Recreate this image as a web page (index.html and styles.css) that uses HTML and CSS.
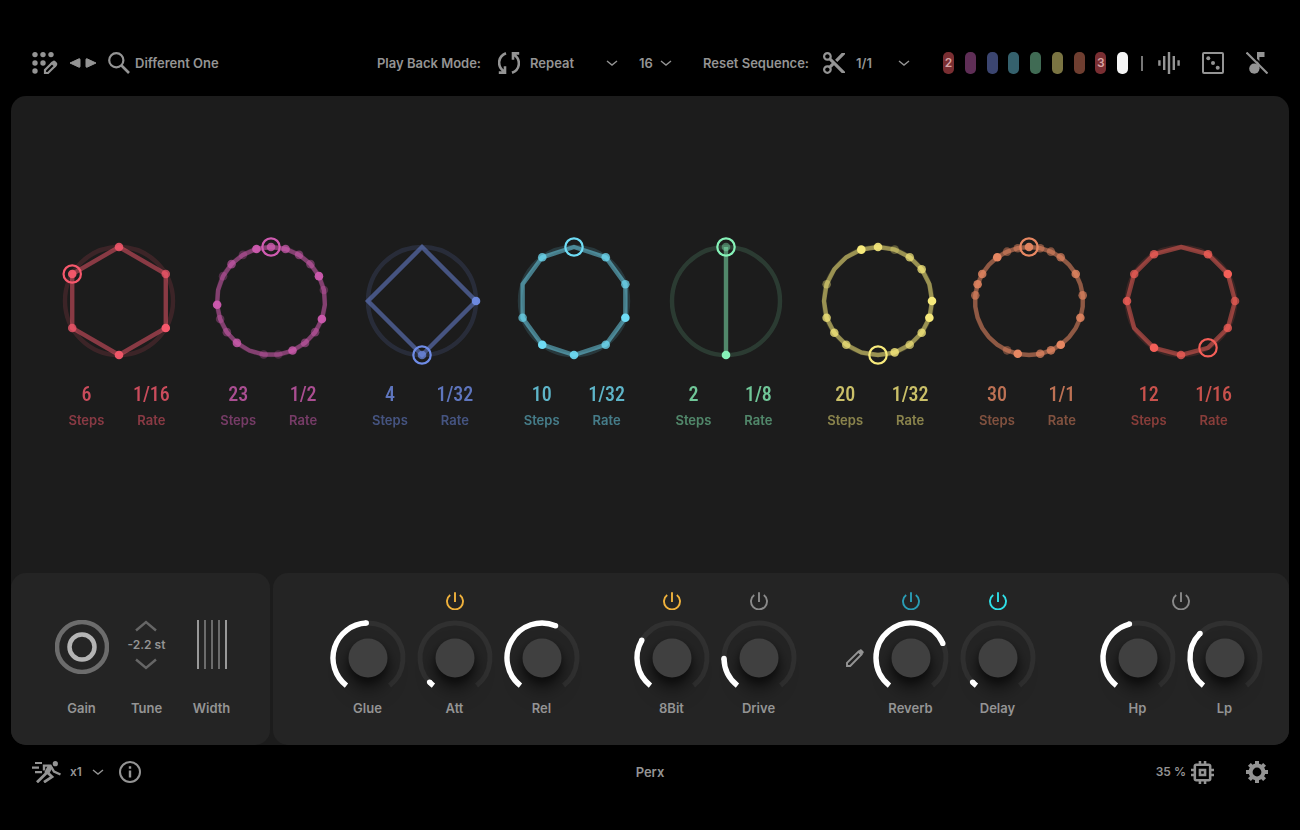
FILE: index.html
```html
<!DOCTYPE html>
<html lang="en">
<head>
  <meta charset="UTF-8">
  <meta name="viewport" content="width=device-width, initial-scale=1.0">
  <title>Perx</title>
  <link rel="stylesheet" href="styles.css">
</head>
<body>
  <header class="topbar">
    <div class="preset">
      <button class="icon-btn" aria-label="Edit preset">
        <svg width="26" height="24" viewBox="0 0 26 24">
          <g fill="currentColor">
            <circle cx="3" cy="3.6" r="2.7"/><circle cx="11" cy="3.6" r="2.7"/><circle cx="19" cy="3.6" r="2.7"/>
            <circle cx="3" cy="12" r="2.7"/><circle cx="11" cy="12" r="2.7"/><circle cx="3" cy="20" r="2.7"/>
            <path d="M18 12.500 L20.800 10 Q22 9 23.200 10 L24.900 11.800 Q25.800 13 24.900 14.200 L22.500 17 Z"/>
          </g>
          <path d="M13 22 V19 L20 12 L23 15 L16 22 Z" fill="#000" stroke="currentColor" stroke-width="2.200"/>
        </svg>
      </button>
      <div class="steppers">
        <button class="icon-btn" aria-label="Previous preset">
          <svg width="12" height="12" viewBox="0 0 12 12"><path d="M1 6 L10 1.800 Q11 1.500 11 2.500 V9.500 Q11 10.500 10 10.200 Z" fill="currentColor" stroke="currentColor" stroke-linejoin="round"/></svg>
        </button>
        <button class="icon-btn" aria-label="Next preset">
          <svg width="12" height="12" viewBox="0 0 12 12"><path d="M11 6 L2 1.800 Q1 1.500 1 2.500 V9.500 Q1 10.500 2 10.200 Z" fill="currentColor" stroke="currentColor" stroke-linejoin="round"/></svg>
        </button>
      </div>
      <button class="preset-name">
        <svg width="22" height="22" viewBox="0 0 22 22" fill="none" stroke="currentColor" stroke-width="2.200"><circle cx="8.300" cy="8.300" r="7.100"/><path d="M13.500 13.500 L21 21" stroke-width="2.700"/></svg>
        Different One
      </button>
    </div>

    <div class="playback">
      <label for="mode">Play Back Mode:</label>
      <svg class="mode-icon" width="22" height="22" viewBox="0 0 22 22" fill="none" stroke="currentColor" stroke-width="2.600">
        <path d="M8 1.200 C-0.500 4.500 -1 14.500 6 19.500 M0.800 20.600 H7 V14.200"/>
        <path d="M8 1.200 C-0.500 4.500 -1 14.500 6 19.500 M0.800 20.600 H7 V14.200" transform="rotate(180 11 11)"/>
      </svg>
      <div class="select mode">
        <select id="mode"><option>Repeat</option><option>Once</option></select>
        <svg class="chevron" width="12" height="8" viewBox="0 0 12 8"><path d="M1 2 L6 6 L11 2"/></svg>
      </div>
      <div class="select length">
        <select id="length" aria-label="Length"><option>16</option><option>32</option></select>
        <svg class="chevron" width="12" height="8" viewBox="0 0 12 8"><path d="M1 2 L6 6 L11 2"/></svg>
      </div>
      <label for="reset">Reset Sequence:</label>
      <svg class="reset-icon" width="22" height="22" viewBox="2 2 20 20" fill="currentColor"><path d="M9.640 7.640c.23-.5.36-1.050.36-1.640 0-2.210-1.790-4-4-4S2 3.790 2 6s1.790 4 4 4c.59 0 1.140-.13 1.640-.36L10 12l-2.360 2.360C7.140 14.130 6.590 14 6 14c-2.210 0-4 1.790-4 4s1.790 4 4 4 4-1.790 4-4c0-.59-.13-1.140-.36-1.640L12 14l7 7h3v-1L9.640 7.640zM6 8c-1.100 0-2-.89-2-2s.9-2 2-2 2 .89 2 2-.9 2-2 2zm0 12c-1.100 0-2-.89-2-2s.9-2 2-2 2 .89 2 2-.9 2-2 2zM19 3l-6 6 2 2 7-7V3z"/></svg>
      <div class="select reset">
        <select id="reset"><option>1/1</option><option>1/2</option></select>
        <svg class="chevron" width="12" height="8" viewBox="0 0 12 8"><path d="M1 2 L6 6 L11 2"/></svg>
      </div>
    </div>

    <div class="tools">
      <div class="chips">
        <button class="chip red" aria-label="Track 1">2</button>
        <button class="chip purple" aria-label="Track 2"></button>
        <button class="chip blue" aria-label="Track 3"></button>
        <button class="chip cyan" aria-label="Track 4"></button>
        <button class="chip green" aria-label="Track 5"></button>
        <button class="chip yellow" aria-label="Track 6"></button>
        <button class="chip orange" aria-label="Track 7"></button>
        <button class="chip red" aria-label="Track 8">3</button>
        <button class="chip white" aria-label="All tracks"></button>
      </div>
      <span class="divider"></span>
      <div class="tool-icons">
        <button class="icon-btn" aria-label="Waveform">
          <svg width="22" height="22" viewBox="0 0 22 22" stroke="currentColor" stroke-width="2.400"><path d="M1.400 8.200 V13.800 M6.200 4 V18 M11 0 V22 M15.800 4 V18 M20.600 8.200 V13.800"/></svg>
        </button>
        <button class="icon-btn" aria-label="Randomize">
          <svg width="22" height="22" viewBox="0 0 22 22" fill="currentColor"><rect x="1" y="1" width="20" height="20" rx="1" fill="none" stroke="currentColor" stroke-width="2"/><circle cx="6.300" cy="6.300" r="2"/><circle cx="11" cy="11" r="2"/><circle cx="15.700" cy="15.700" r="2"/></svg>
        </button>
        <button class="icon-btn" aria-label="Mute">
          <svg width="22" height="22" viewBox="0 0 22 22"><circle cx="8.300" cy="16.700" r="5.100" fill="currentColor"/><path d="M11 0 H18.500 V5 H13.400 V17 H11 Z" fill="currentColor"/><path d="M2 -1 L23.500 20.500" stroke="#000" stroke-width="1.600"/><path d="M0.500 0.500 L21.500 21.500" stroke="currentColor" stroke-width="2.100"/></svg>
        </button>
      </div>
    </div>
  </header>

  <main class="panel">
    <section class="tracks" id="tracks"></section>

    <section class="controls">
      <div class="output">
        <div class="param">
          <div class="dial">
            <svg width="54" height="54" viewBox="0 0 54 54" fill="none"><circle cx="27" cy="27" r="25" stroke="#6c6c6c" stroke-width="4.500"/><circle cx="27" cy="27" r="12.500" stroke="#b4b4b4" stroke-width="4.500"/></svg>
            <input type="range" id="gain" value="50">
          </div>
          <label for="gain">Gain</label>
        </div>
        <div class="param">
          <div class="tune">
            <button class="icon-btn" aria-label="Tune up"><svg width="22" height="12" viewBox="0 0 22 12"><path d="M1 10.500 L11 2 L21 10.500"/></svg></button>
            <output id="tune">-2.2 st</output>
            <button class="icon-btn" aria-label="Tune down"><svg width="22" height="12" viewBox="0 0 22 12"><path d="M1 1.500 L11 10 L21 1.500"/></svg></button>
          </div>
          <label for="tune">Tune</label>
        </div>
        <div class="param">
          <div class="dial">
            <svg width="32" height="50" viewBox="0 0 32 50" stroke-width="2"><path d="M2 0 V49 M30 0 V49" stroke="#999"/><path d="M9 0 V49 M16 0 V49 M23 0 V49" stroke="#6c6c6c"/></svg>
            <input type="range" id="width" value="50">
          </div>
          <label for="width">Width</label>
        </div>
      </div>

      <div class="effects">
        <div class="group">
          <button class="power amber" aria-label="Compressor on"></button>
          <div class="knobs">
            <div class="knob"><div class="dial"><input type="range" id="glue" value="49"></div><label for="glue">Glue</label></div>
            <div class="knob"><div class="dial"><input type="range" id="att" value="3"></div><label for="att">Att</label></div>
            <div class="knob"><div class="dial"><input type="range" id="rel" value="58"></div><label for="rel">Rel</label></div>
          </div>
        </div>
        <div class="group pair">
          <div class="knob"><button class="power amber" aria-label="8Bit on"></button><div class="dial"><input type="range" id="bit" value="29"></div><label for="bit">8Bit</label></div>
          <div class="knob"><button class="power" aria-label="Drive on"></button><div class="dial"><input type="range" id="drive" value="18"></div><label for="drive">Drive</label></div>
        </div>
        <div class="group pair space">
          <button class="icon-btn edit" aria-label="Edit reverb">
            <svg width="20" height="20" viewBox="0 0 20 20"><path d="M2 18 V14.800 L13.500 3.500 L16.500 6.500 L5.200 18 Z" fill="none" stroke="currentColor" stroke-width="1.900"/><path d="M12.500 4 L15 1.500 Q15.800 1 16.500 1.600 L18.500 3.500 Q19 4.300 18.500 5 L16 7.500 Z" fill="currentColor"/></svg>
          </button>
          <div class="knob"><button class="power teal" aria-label="Reverb on"></button><div class="dial"><input type="range" id="reverb" value="73"></div><label for="reverb">Reverb</label></div>
          <div class="knob"><button class="power aqua" aria-label="Delay on"></button><div class="dial"><input type="range" id="delay" value="3"></div><label for="delay">Delay</label></div>
        </div>
        <div class="group">
          <button class="power" aria-label="Filter on"></button>
          <div class="knobs">
            <div class="knob"><div class="dial"><input type="range" id="hp" value="45"></div><label for="hp">Hp</label></div>
            <div class="knob"><div class="dial"><input type="range" id="lp" value="34"></div><label for="lp">Lp</label></div>
          </div>
        </div>
      </div>
    </section>
  </main>

  <footer class="bottombar">
    <div class="speed">
      <svg width="29" height="22" viewBox="0 0 29 22" fill="none" stroke="currentColor" stroke-width="2.200">
        <circle cx="23.300" cy="2.700" r="2.600" fill="currentColor" stroke="none"/>
        <path d="M3 2 H10 M0 6.600 H7 M3 11.200 H10"/>
        <path d="M12 9.500 V4.600 H18.500 L22 10.500 L28.500 13.500" stroke-width="2.400"/>
        <path d="M18.500 5 L14.500 12.500" stroke-width="5"/>
        <path d="M15 11.500 L5 21.300 M16 12 L20 15.800 L12 21.200" stroke-width="2.800"/>
      </svg>
      <div class="select rate">
        <select id="speed" aria-label="Speed"><option>x1</option><option>x2</option></select>
        <svg class="chevron" width="12" height="8" viewBox="0 0 12 8"><path d="M1 2 L6 6 L11 2"/></svg>
      </div>
      <button class="icon-btn" aria-label="Info">
        <svg width="22" height="22" viewBox="0 0 22 22"><circle cx="11" cy="11" r="10" fill="none" stroke="currentColor" stroke-width="2"/><path d="M11 9.500 V16.500 M11 5.300 V7.700" stroke="currentColor" stroke-width="2.400"/></svg>
      </button>
    </div>
    <span class="title">Perx</span>
    <div class="system">
      <span class="cpu">35 %
        <svg width="23" height="23" viewBox="3 3 18 18" fill="currentColor"><path d="M15 9H9v6h6V9zm-2 4h-2v-2h2v2zm8-2V9h-2V7c0-1.100-.9-2-2-2h-2V3h-2v2h-2V3H9v2H7c-1.100 0-2 .9-2 2v2H3v2h2v2H3v2h2v2c0 1.100.9 2 2 2h2v2h2v-2h2v2h2v-2h2c1.100 0 2-.9 2-2v-2h2v-2h-2v-2h2zm-4 6H7V7h10v10z"/></svg>
      </span>
      <button class="icon-btn" aria-label="Settings">
        <svg width="22" height="22" viewBox="-11 -11 22 22" stroke="currentColor">
          <circle r="6.400" fill="none" stroke-width="4"/>
          <path d="M0 -11 V-7 M0 11 V7 M-11 0 H-7 M11 0 H7 M-7.600 -7.600 L-5 -5 M7.600 7.600 L5 5 M-7.600 7.600 L-5 5 M7.600 -7.600 L5 -5" stroke-width="4"/>
        </svg>
      </button>
    </div>
  </footer>

  <script src="script.js"></script>
</body>
</html>
```
FILE: styles.css
```css
* {
  margin: 0;
  padding: 0;
  box-sizing: border-box;
}

body {
  display: flex;
  flex-direction: column;
  min-height: 100vh;
  background-color: #000;
  color: #949494;
  font-family: Inter, Roboto, sans-serif;
  font-size: 13px;
  font-weight: 600;
  line-height: 20px;
}

svg {
  display: block;
  flex: none;
}

button,
select,
input {
  background: none;
  border: none;
  color: inherit;
  font: inherit;
}

button,
select {
  cursor: pointer;
}

.icon-btn {
  display: flex;
}

.select {
  display: grid;
  align-items: center;
}

.select > * {
  grid-area: 1 / 1;
}

.select select {
  width: 100%;
  appearance: none;
}

.select option {
  background-color: #242424;
}

.chevron {
  justify-self: end;
  fill: none;
  stroke: currentColor;
  stroke-width: 1.4;
  pointer-events: none;
}

/* top bar */
.topbar {
  display: flex;
  align-items: center;
  gap: 33px;
  height: 96px;
  padding: 30px 32px 0;
}

.preset,
.steppers,
.preset-name,
.playback,
.tools,
.chips,
.tool-icons {
  display: flex;
  align-items: center;
}

.preset {
  gap: 11px;
}

.steppers {
  gap: 4px;
}

.preset-name {
  gap: 5px;
}

.playback {
  margin-left: auto;
}

.mode-icon {
  margin: 0 10px 0 17px;
}

.select.mode {
  width: 88px;
  margin-right: 21px;
}

.select.length {
  width: 33px;
  margin-right: 31px;
}

.reset-icon {
  margin: 0 11px 0 14px;
}

.select.reset {
  width: 54px;
}

.chips {
  justify-content: space-between;
  width: 185px;
}

.chip {
  width: 11px;
  height: 22px;
  border-radius: 5px;
  font-size: 12px;
  text-align: center;
  color: #d8a5a5;
}

.chip.red { background-color: #7a2e32; }
.chip.purple { background-color: #5f2e56; }
.chip.blue { background-color: #3b4570; }
.chip.cyan { background-color: #35616d; }
.chip.green { background-color: #406b54; }
.chip.yellow { background-color: #7a7442; }
.chip.orange { background-color: #6f3e30; }
.chip.white { background-color: #f5f5f5; }

.divider {
  width: 2px;
  height: 15px;
  margin: 0 15px 0 13px;
  background-color: #777;
}

.tool-icons {
  gap: 22px;
}

/* main panel */
.panel {
  flex: 1;
  display: flex;
  flex-direction: column;
  margin: 0 11px;
  border-radius: 15px;
  background-color: #1c1c1c;
}

.tracks {
  flex: 1;
  display: grid;
  grid-template-columns: repeat(8, 1fr);
  align-items: center;
  padding: 0 32px 2px;
}

.track {
  display: flex;
  flex-direction: column;
  align-items: center;
  gap: 14px;
}

.track-values {
  display: grid;
  grid-template-columns: 65px 65px;
  color: var(--color);
}

.track-values div {
  display: flex;
  flex-direction: column;
  text-align: center;
}

.track-values input,
.track-values select {
  width: 100%;
  height: 28px;
  appearance: none;
  font-family: "Roboto Condensed", "Liberation Sans Narrow", Roboto, sans-serif;
  font-size: 20px;
  font-weight: 500;
  text-align: center;
  text-align-last: center;
  opacity: 0.8;
}

.track-values label {
  order: 1;
  line-height: 24px;
  opacity: 0.5;
}

/* bottom controls */
.controls {
  display: flex;
  gap: 3px;
}

.output,
.effects {
  display: flex;
  align-items: flex-end;
  border-radius: 15px;
  background-color: #242424;
  padding-bottom: 27px;
}

.output {
  padding-left: 38px;
  padding-right: 26px;
}

.param {
  display: flex;
  flex-direction: column;
  align-items: center;
  gap: 24px;
  width: 65px;
}

.dial {
  display: grid;
  justify-items: center;
}

.dial > * {
  grid-area: 1 / 1;
}

.dial input {
  width: 100%;
  height: 100%;
  opacity: 0;
  cursor: pointer;
}

.param .dial {
  height: 54px;
}

.tune {
  display: flex;
  flex-direction: column;
  align-items: center;
  height: 54px;
  gap: 3px;
  font-size: 12px;
  white-space: nowrap;
}

.tune svg {
  fill: none;
  stroke: #666;
  stroke-width: 2.4;
}

.effects {
  flex: 1;
  justify-content: space-between;
  padding: 19px 21px 27px 51px;
}

.group,
.knob {
  display: flex;
  flex-direction: column;
  align-items: center;
}

.group.pair {
  flex-direction: row;
}

.group.space {
  margin-right: 10px;
}

.knobs {
  display: flex;
}

.knob {
  width: 87px;
}

.knob label {
  margin-top: 2px;
}

.power {
  display: flex;
  margin-bottom: 10px;
  color: #8a8a8a;
}

.power.amber { color: #f0b23c; }
.power.teal { color: #2a9db5; }
.power.aqua { color: #2fe0e8; }

.edit {
  width: 22px;
  margin-top: 5px;
}

.cap {
  fill: #404040;
  filter: drop-shadow(0 5px 4px rgba(0, 0, 0, 0.4)) drop-shadow(0 10px 8px rgba(0, 0, 0, 0.5));
}

/* footer */
.bottombar {
  display: grid;
  grid-template-columns: 1fr auto 1fr;
  align-items: center;
  height: 85px;
  padding: 0 32px 31px;
}

.speed,
.system,
.cpu {
  display: flex;
  align-items: center;
}

.select.rate {
  width: 34px;
  margin: 0 15px 0 9px;
}

.select.rate,
.cpu {
  font-size: 12px;
}

.system {
  justify-content: flex-end;
  gap: 32px;
}

.cpu {
  gap: 5px;
}
```
FILE: script.js
```js
// dots: step index -> velocity (0 to 1), steps left out are silent
const tracks = [
  { steps: 6, rate: "1/16", color: "#f6586c", head: 5, dots: { 0: 0.85, 1: 0.7, 2: 1, 3: 0.95, 4: 0.75, 5: 0.95 } },
  { steps: 23, rate: "1/2", color: "#cf5bb0", head: 0, dots: { 0: 0.8, 1: 0.7, 2: 0.5, 3: 0.45, 4: 0.95, 5: 0.3, 7: 0.95, 8: 0.45, 9: 0.5, 10: 0.8, 11: 0.25, 12: 0.3, 14: 0.8, 15: 0.4, 16: 0.35, 17: 0.95, 19: 0.3, 20: 0.6, 21: 0.3, 22: 0.95 } },
  { steps: 4, rate: "1/32", color: "#6f8ce6", head: 2, dots: { 1: 0.95, 2: 0.7 } },
  { steps: 10, rate: "1/32", color: "#6fdcf5", head: 0, dots: { 1: 0.75, 2: 0.7, 3: 1, 4: 0.75, 5: 0.9, 6: 1, 7: 0.65, 9: 0.75 } },
  { steps: 2, rate: "1/8", color: "#86f2b8", head: 0, dots: { 0: 0.4, 1: 1 } },
  { steps: 20, rate: "1/32", color: "#f7ea7c", head: 10, dots: { 0: 0.9, 1: 0.3, 2: 0.7, 3: 0.75, 5: 1, 6: 1, 7: 0.75, 8: 0.65, 9: 0.8, 12: 0.7, 13: 0.75, 14: 0.75, 16: 0.4, 19: 1 } },
  { steps: 30, rate: "1/1", color: "#e68762", head: 0, dots: { 0: 0.95, 1: 0.5, 2: 0.5, 3: 0.65, 5: 0.8, 7: 0.65, 9: 0.85, 12: 1, 13: 0.75, 14: 0.7, 16: 1, 17: 0.4, 23: 0.6, 24: 0.85, 25: 0.8, 27: 1, 28: 0.45, 29: 0.5 } },
  { steps: 12, rate: "1/16", color: "#f45f58", head: 5, dots: { 1: 0.8, 2: 1, 3: 0.65, 4: 0.75, 6: 0.75, 7: 1, 9: 0.8, 10: 0.7, 11: 0.75 } }
];

function point(cx, cy, r, degrees) {
  const a = (degrees * Math.PI) / 180;
  return [cx + r * Math.sin(a), cy - r * Math.cos(a)].map((n) => n.toFixed(2));
}

function ring(track) {
  const at = (i) => point(65, 65, 54, (i * 360) / track.steps);
  const corners = Array.from({ length: track.steps }, (_, i) => at(i).join());
  const dots = Object.entries(track.dots).map(([i, velocity]) => {
    const [x, y] = at(i);
    return `<circle cx="${x}" cy="${y}" r="4.3" fill="${track.color}" opacity="${velocity}"/>`;
  });
  const [hx, hy] = at(track.head);
  return `<svg width="130" height="130" viewBox="0 0 130 130" fill="none" stroke-width="4.4">
    <circle cx="65" cy="65" r="54" stroke="${track.color}" opacity="0.15"/>
    <polygon points="${corners.join(" ")}" stroke="${track.color}" opacity="0.5"/>
    ${dots.join("")}
    <circle cx="${hx}" cy="${hy}" r="8.7" stroke="${track.color}" stroke-width="2.2"/>
  </svg>`;
}

document.getElementById("tracks").innerHTML = tracks.map((track, i) => `
  <div class="track">
    ${ring(track)}
    <div class="track-values" style="--color: ${track.color}">
      <div><label for="steps${i}">Steps</label><input type="text" id="steps${i}" value="${track.steps}"></div>
      <div><label for="rate${i}">Rate</label><select id="rate${i}"><option>${track.rate}</option></select></div>
    </div>
  </div>`).join("");

function arc(from, to) {
  const [x1, y1] = point(38, 38, 35, from);
  const [x2, y2] = point(38, 38, 35, to);
  return `M${x1} ${y1} A35 35 0 ${to - from > 180 ? 1 : 0} 1 ${x2} ${y2}`;
}

function drawKnob(dial) {
  const input = dial.querySelector("input");
  const end = -142 + input.value * 2.84;
  const [x, y] = point(38, 38, 35, end);
  dial.querySelector("svg").innerHTML = `
    <path d="${arc(-142, 142)}" fill="none" stroke="#303030" stroke-width="5"/>
    <circle class="cap" cx="38" cy="38" r="19.5"/>
    <path d="${arc(-142, end)}" fill="none" stroke="#fff" stroke-width="5.4"/>
    <circle cx="${x}" cy="${y}" r="2.7" fill="#fff"/>`;
}

document.querySelectorAll(".knob .dial").forEach((dial) => {
  dial.insertAdjacentHTML("afterbegin", '<svg width="76" height="76" viewBox="0 0 76 76" overflow="visible"></svg>');
  dial.querySelector("input").addEventListener("input", () => drawKnob(dial));
  drawKnob(dial);
});

document.querySelectorAll(".power").forEach((button) => {
  button.innerHTML = `<svg width="18" height="18" viewBox="0 0 18 18" fill="none" stroke="currentColor" stroke-width="1.9">
    <path d="M4.200 3 A8 8 0 1 0 13.800 3 M9 0.300 V10"/>
  </svg>`;
});
```
